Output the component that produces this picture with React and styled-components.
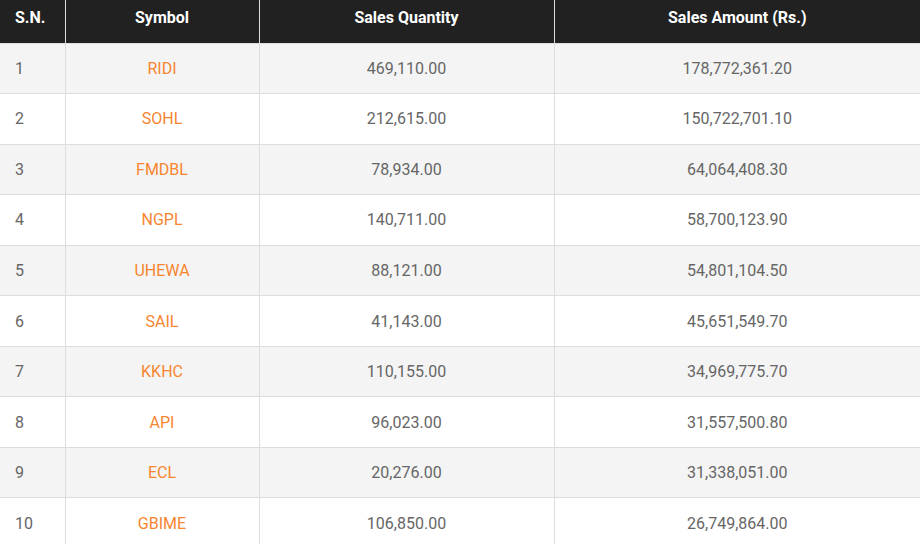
import React from 'react';
import styled, {createGlobalStyle} from 'styled-components';

const GlobalStyle = createGlobalStyle`
	html, body {
		margin: 0;
		padding: 0;
		background: #fff;
		font-family: Roboto, "Liberation Sans", Arial, sans-serif;
	}
`;

const Table = styled.table`
	width: 920px;
	border-collapse: collapse;
	table-layout: fixed;
	font-size: 16px;
`;

const HeadCell = styled.th`
	height: 43px;
	padding: 0 15px 8px;
	box-sizing: border-box;
	background-color: #212121;
	color: #fff;
	font-weight: 700;
	text-align: ${props => (props.left ? 'left' : 'center')};
	vertical-align: middle;
	border-left: 1px solid #ddd;
	border-bottom: 1px solid #ddd;

	&:first-child {
		border-left: none;
	}
`;

const Row = styled.tr`
	height: 50.55px;
	background-color: ${props => (props.odd ? '#f4f4f4' : '#fff')};
`;

const Cell = styled.td`
	padding: 0 15px;
	color: ${props => (props.accent ? '#f7852f' : '#666')};
	text-align: ${props => (props.left ? 'left' : 'center')};
	vertical-align: middle;
	border-left: 1px solid #ddd;
	border-bottom: 1px solid #ddd;

	&:first-child {
		border-left: none;
	}
`;

const rows = [
	['RIDI', '469,110.00', '178,772,361.20'],
	['SOHL', '212,615.00', '150,722,701.10'],
	['FMDBL', '78,934.00', '64,064,408.30'],
	['NGPL', '140,711.00', '58,700,123.90'],
	['UHEWA', '88,121.00', '54,801,104.50'],
	['SAIL', '41,143.00', '45,651,549.70'],
	['KKHC', '110,155.00', '34,969,775.70'],
	['API', '96,023.00', '31,557,500.80'],
	['ECL', '20,276.00', '31,338,051.00'],
	['GBIME', '106,850.00', '26,749,864.00'],
];

const App = () => (
	<>
		<GlobalStyle />
		<Table>
			<colgroup>
				<col style={{width: 65}} />
				<col style={{width: 194}} />
				<col style={{width: 295}} />
				<col style={{width: 366}} />
			</colgroup>
			<thead>
				<tr>
					<HeadCell left>S.N.</HeadCell>
					<HeadCell>Symbol</HeadCell>
					<HeadCell>Sales Quantity</HeadCell>
					<HeadCell>Sales Amount (Rs.)</HeadCell>
				</tr>
			</thead>
			<tbody>
				{rows.map(([symbol, qty, amount], i) => (
					<Row key={symbol} odd={i % 2 === 0}>
						<Cell left>{i + 1}</Cell>
						<Cell accent>{symbol}</Cell>
						<Cell>{qty}</Cell>
						<Cell>{amount}</Cell>
					</Row>
				))}
			</tbody>
		</Table>
	</>
);

export default App;
